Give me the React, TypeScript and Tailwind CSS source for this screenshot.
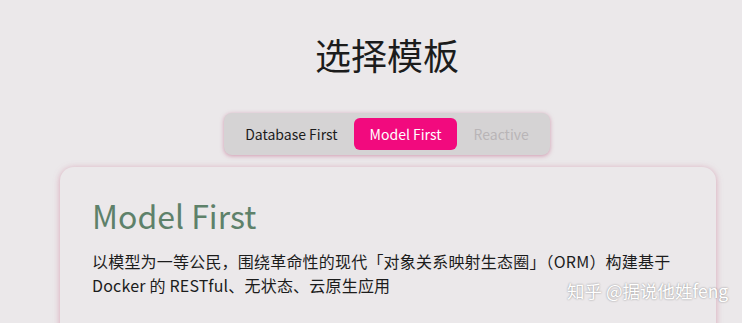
import { useState } from "react";

type TabId = "database" | "model" | "reactive";

const TABS: { id: TabId; label: string; disabled?: boolean }[] = [
  { id: "database", label: "Database First" },
  { id: "model", label: "Model First" },
  { id: "reactive", label: "Reactive", disabled: true },
];

const FONT = '"Noto Sans CJK SC", "Noto Sans", sans-serif';

const App = () => {
  const [active, setActive] = useState<TabId>("model");

  return (
    <div
      className="relative h-[323px] w-full overflow-hidden bg-[#ebe8ea] text-[#1c1c1c]"
      style={{ fontFamily: FONT }}
    >
      <div className="flex flex-col items-center pl-[32px]">
        {/* Title */}
        <h1 className="mt-[29px] text-[36px] leading-[50px] font-normal">选择模板</h1>

        {/* Tabs */}
        <div className="mt-[34px] flex items-center rounded-[8px] bg-[#d5d3d4] p-[5px] shadow-[0_1px_4px_rgba(190,90,130,0.55)]">
          {TABS.map((tab) => (
            <button
              key={tab.id}
              disabled={tab.disabled}
              onClick={() => setActive(tab.id)}
              className={
                tab.id === active
                  ? "h-[32px] rounded-[6px] bg-[#f20a7e] px-[16px] text-[14px] text-white"
                  : tab.disabled
                  ? "h-[32px] px-[16px] text-[14px] text-[#b9b5b7]"
                  : "h-[32px] px-[16px] text-[14px] text-[#1c1c1c]"
              }
            >
              {tab.label}
            </button>
          ))}
        </div>
      </div>

      {/* Card */}
      <div className="ml-[60px] mr-[26px] mt-[12px] h-[200px] rounded-[14px] bg-[#ebe8ea] px-[32px] pt-[26px] shadow-[0_1px_6px_rgba(200,110,140,0.55)]">
        <h2 className="text-[32px] leading-[44px] font-normal text-[#5e816a]">Model First</h2>
        <p className="mt-[12px] text-[16px] leading-[24px] tracking-[0.2px] text-[#1c1c1c]">
          以模型为一等公民，围绕革命性的现代「对象关系映射生态圈」（ORM）构建基于 Docker 的 RESTful、无状态、云原生应用
        </p>
      </div>

      {/* Watermark */}
      <div className="absolute left-[567px] top-[278px] text-[17.5px] leading-[26px] text-white [text-shadow:0_0_2px_rgba(0,0,0,0.45)]">
        知乎 @据说他姓feng
      </div>
    </div>
  );
};

export default App;
